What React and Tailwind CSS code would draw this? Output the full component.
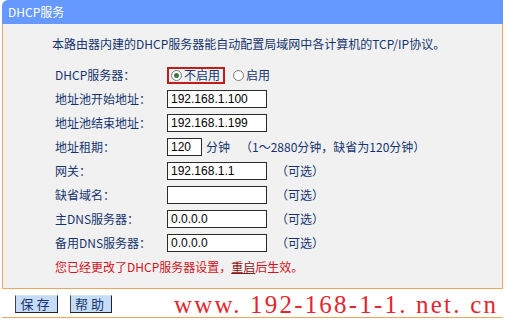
import React from "react";

const CJK = { fontFamily: '"Noto Sans CJK SC", "Liberation Sans", sans-serif' };

function Radio({ checked }) {
  return (
    <span className="inline-flex h-[11px] w-[11px] items-center justify-center rounded-full border border-[#7a7a7a] bg-white">
      {checked && <span className="h-[5px] w-[5px] rounded-full bg-[#3d7a3d]" />}
    </span>
  );
}

function Input({ value, w = "w-[100px]" }) {
  return (
    <div
      className={`flex h-[18px] ${w} items-center border border-[#2b2b2b] bg-white pl-[3px] text-[12px] text-black`}
      style={{ fontFamily: '"Liberation Sans", sans-serif' }}
    >
      {value}
    </div>
  );
}

function Row({ label, children }) {
  return (
    <div className="flex h-[24px] items-center">
      <div className="w-[112px] shrink-0">{label}</div>
      <div className="flex items-center">{children}</div>
    </div>
  );
}

const Opt = () => <span className="ml-[9px]">（可选）</span>;

export default function App() {
  return (
    <div className="relative h-[321px] w-[508px] overflow-hidden bg-white text-[12px] text-[#15346f]" style={CJK}>
      <div className="ml-[2px] w-[501px]">
        <div className="flex h-[24px] items-center rounded-tl-[6px] bg-[#6699ff] pl-[6px] text-[12px] text-white">
          DHCP服务
        </div>
        <div className="h-[264px] border-x border-[#f4a35a] bg-[#f1f1f1] pt-[8px] pl-[52px]">
          <div className="-ml-[3px] flex h-[24px] items-center">
            本路由器内建的DHCP服务器能自动配置局域网中各计算机的TCP/IP协议。
          </div>
          <div className="mt-[7px]">
            <Row label="DHCP服务器：">
              <span className="flex h-[17px] items-center border-2 border-[#c41a1a] pl-[2px] pr-[3px]">
                <Radio checked />
                <span className="ml-[2px]">不启用</span>
              </span>
              <span className="ml-[8px] flex items-center">
                <Radio />
                <span className="ml-[2px]">启用</span>
              </span>
            </Row>
            <Row label="地址池开始地址：">
              <Input value="192.168.1.100" />
            </Row>
            <Row label="地址池结束地址：">
              <Input value="192.168.1.199" />
            </Row>
            <Row label="地址租期：">
              <Input value="120" w="w-[35px]" />
              <span className="ml-[4px]">分钟</span>
              <span className="ml-[10px]">（1～2880分钟，缺省为120分钟）</span>
            </Row>
            <Row label="网关：">
              <Input value="192.168.1.1" />
              <Opt />
            </Row>
            <Row label="缺省域名：">
              <Input value="" />
              <Opt />
            </Row>
            <Row label="主DNS服务器：">
              <Input value="0.0.0.0" />
              <Opt />
            </Row>
            <Row label="备用DNS服务器：">
              <Input value="0.0.0.0" />
              <Opt />
            </Row>
            <div className="flex h-[24px] items-center text-[#d4141c]">
              您已经更改了DHCP服务器设置，
              <span className="text-[#8a1616] underline">重启</span>
              后生效。
            </div>
          </div>
        </div>
        <div className="flex h-[30px] items-center border-y border-[#f4a35a] bg-white">
          <button
            className="ml-[13px] mt-[2px] flex h-[18px] w-[43px] items-center justify-center border border-t-[#d8e6f4] border-l-[#444] border-r-[#222] border-b-[#222] bg-[#c6dcf6] text-[13px] tracking-[3px] text-[#15346f]"
            style={CJK}
          >
            保存
          </button>
          <button
            className="ml-[12px] mt-[2px] flex h-[18px] w-[42px] items-center justify-center border border-t-[#d8e6f4] border-l-[#444] border-r-[#222] border-b-[#222] bg-[#c6dcf6] text-[13px] tracking-[3px] text-[#15346f]"
            style={CJK}
          >
            帮助
          </button>
          <span
            className="ml-[62px] mt-[3px] whitespace-pre text-[25px] leading-none tracking-[2.2px] text-[#e4262c]"
            style={{ fontFamily: '"Liberation Serif", serif' }}
          >
            www. 192-168-1-1. net. cn
          </span>
        </div>
      </div>
    </div>
  );
}
